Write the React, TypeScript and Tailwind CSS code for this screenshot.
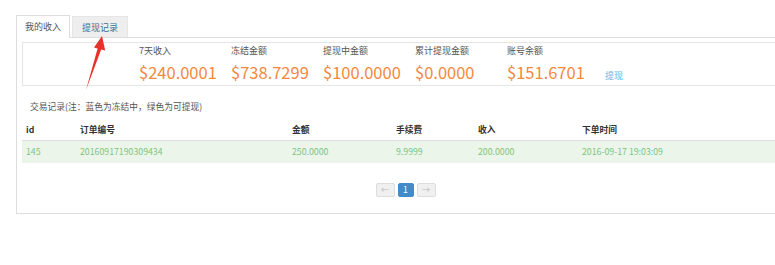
import React from 'react';

const stats = [
  { label: '7天收入', value: '$240.0001' },
  { label: '冻结金额', value: '$738.7299' },
  { label: '提现中金额', value: '$100.0000' },
  { label: '累计提现金额', value: '$0.0000' },
];

const rows = [
  { id: '145', order: '20160917190309434', amount: '250.0000', fee: '9.9999', income: '200.0000', time: '2016-09-17 19:03:09' },
];

const cols = 'grid grid-cols-[54px_212px_104px_82px_104px_1fr]';

const App: React.FC = () => {
  return (
    <div className="relative w-[775px] h-[265px] overflow-hidden bg-white pt-[15px] pl-[16px] font-['Noto_Sans_CJK_SC',sans-serif] text-[8.75px] text-[#555]">
      {/* tabs */}
      <div className="flex items-end h-[22px] text-[9px]">
        <div className="relative z-10 -mb-px h-[23px] px-[8px] leading-[21px] bg-white border border-b-0 border-[#ddd] text-[#555]">
          我的收入
        </div>
        <div className="ml-[2px] h-[21px] px-[9px] leading-[21px] bg-[#eee] border border-b-0 border-[#e6e6e6] text-[#3d6f95]">
          提现记录
        </div>
      </div>

      <div className="w-[778px] border-l border-t border-b border-[#ddd] pt-[4px] px-[5px] pb-[16px]">
        {/* summary */}
        <div className="flex h-[44px] border border-[#e5e5e5]">
          <div className="w-[116px] shrink-0" />
          {stats.map(s => (
            <div key={s.label} className="w-[92px] shrink-0 flex flex-col pt-[2px]">
              <span className="leading-[12px] text-[9px] text-[#555]">{s.label}</span>
              <span className="mt-[4px] leading-[22px] text-[16.5px] text-[#f5883d]">{s.value}</span>
            </div>
          ))}
          <div className="w-[98px] shrink-0 flex flex-col pt-[2px]">
            <span className="leading-[12px] text-[9px] text-[#555]">账号余额</span>
            <span className="mt-[4px] leading-[22px] text-[16.5px] text-[#f5883d]">$151.6701</span>
          </div>
          <div className="pt-[26px] text-[9px] text-[#63b4e6]">提现</div>
        </div>

        <div className="mt-[15px] pl-[8px] leading-[12px] text-[#555]">交易记录(注：蓝色为冻结中，绿色为可提现)</div>

        {/* table */}
        <div className="mt-[6px]">
          <div className={`${cols} h-[22px] items-center border-b border-[#ddd] font-bold text-[#333]`}>
            <div className="pl-[4px]">id</div>
            <div className="pl-[4px]">订单编号</div>
            <div className="pl-[4px]">金额</div>
            <div className="pl-[4px]">手续费</div>
            <div className="pl-[4px]">收入</div>
            <div className="pl-[4px]">下单时间</div>
          </div>
          {rows.map(r => (
            <div key={r.id} className={`${cols} h-[22px] items-center bg-[#ebf5ea] text-[#7fc47f]`}>
              <div className="pl-[4px]">{r.id}</div>
              <div className="pl-[4px]">{r.order}</div>
              <div className="pl-[4px]">{r.amount}</div>
              <div className="pl-[4px]">{r.fee}</div>
              <div className="pl-[4px]">{r.income}</div>
              <div className="pl-[4px]">{r.time}</div>
            </div>
          ))}
        </div>

        {/* pagination */}
        <div className="mt-[20px] flex justify-center gap-[3px]">
          <div className="w-[19px] h-[14px] flex items-center justify-center bg-[#f0f0f0] border border-[#ddd] rounded-[2px] text-[#bbb] text-[8px]">←</div>
          <div className="w-[16px] h-[14px] flex items-center justify-center bg-[#428bca] border border-[#428bca] rounded-[2px] text-white">1</div>
          <div className="w-[19px] h-[14px] flex items-center justify-center bg-[#f0f0f0] border border-[#ddd] rounded-[2px] text-[#bbb] text-[8px]">→</div>
        </div>
      </div>

      {/* annotation arrow */}
      <svg className="absolute left-0 top-0 pointer-events-none" width="775" height="265" viewBox="0 0 775 265">
        <polygon points="86,90 97.6,48.5 94,47.5 102,36 105.2,50.5 101.2,49.5" fill="#e8312a" />
      </svg>
    </div>
  );
};

export default App;
